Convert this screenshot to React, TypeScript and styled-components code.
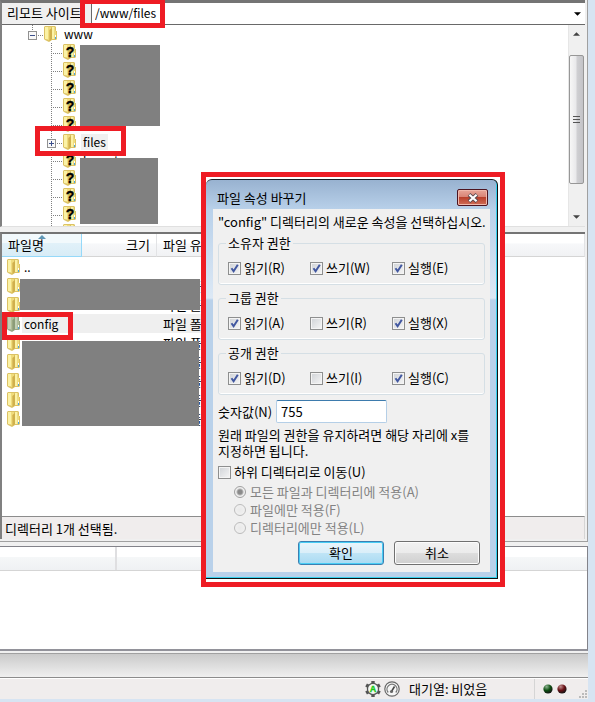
import React from "react";
import styled, { createGlobalStyle, css } from "styled-components";

const GlobalStyle = createGlobalStyle`
  *, *::before, *::after { box-sizing: border-box; }
  body {
    margin: 0;
    background: #d7e4f2;
    color: #000;
    font: 13px/16px "Noto Sans CJK KR", "Noto Sans", sans-serif;
  }
  button, input, select { font: inherit; color: inherit; }
`;

const Page = styled.div`
  position: relative;
  display: flex;
  flex-direction: column;
  min-height: 100vh;
  padding: 0 7px 3px 0;
  overflow: hidden;
`;

const Window = styled.main`
  flex: 1;
  display: flex;
  flex-direction: column;
  background: #f0f0f0;
`;

const RemoteSide = styled.div`
  flex: 1;
  display: flex;
  flex-direction: column;
  gap: 5px;
  padding: 0 2px 2px 0;
  border-right: 1px solid #a0a0a0;
  border-bottom: 1px solid #a0a0a0;
`;

const sunken = css`
  border-left: 2px solid #808080;
  border-top: 2px solid #747474;
`;

const SitePane = styled.section`
  ${sunken}
  border-top-width: 3px;
  border-bottom: 1px solid #e0e0e0;
`;

const AddressBar = styled.div`
  display: flex;
  align-items: stretch;
  height: 22px;
  border-bottom: 1px solid #696969;
  background: #f0f0f0;
`;

const AddressLabel = styled.label`
  width: 90px;
  padding: 2px 0 0 5px;
  border-right: 1px solid #696969;
  white-space: nowrap;
`;

const AddressField = styled.div`
  flex: 1;
  display: flex;
  align-items: center;
  padding-right: 4px;
  background: #fff;
`;

const AddressSelect = styled.select`
  flex: 1;
  min-width: 0;
  height: 21px;
  padding: 0 0 2px 3px;
  border: 0;
  outline: 0;
  background: transparent;
  font-size: 12px;
  appearance: none;
`;

const TreePane = styled.div`
  position: relative;
  display: flex;
  height: 201px;
  overflow: hidden;
  background: #fff;
`;

const Tree = styled.ul`
  flex: 1;
  margin: 0;
  padding: 0;
  list-style: none;
`;

const TreeRow = styled.li<{ $depth: number }>`
  display: flex;
  align-items: center;
  height: 18px;
  padding-left: ${(p) => 7 + p.$depth * 19}px;
`;

const TreeLabel = styled.span<{ $marked?: boolean }>`
  margin-left: 5px;
  padding: 0 2px;
  font-size: 12px;
  background: ${(p) => (p.$marked ? "#f0f0f0" : "transparent")};
`;

const Mask = styled.div<{ $x: number; $y: number; $w: number; $h: number }>`
  position: absolute;
  left: ${(p) => p.$x}px;
  top: ${(p) => p.$y}px;
  width: ${(p) => p.$w}px;
  height: ${(p) => p.$h}px;
  background: #808080;
`;

const Highlight = styled(Mask)`
  border: 5px solid #ee1c24;
  background: transparent;
  pointer-events: none;
`;

const ScrollTrack = styled.div`
  display: flex;
  flex-direction: column;
  align-items: center;
  width: 17px;
  padding: 7px 1px 7px 0;
  background: #f0f0f0;
  border-left: 1px solid #e6e6e6;
`;

const ScrollThumb = styled.div`
  display: flex;
  align-items: center;
  justify-content: center;
  width: 15px;
  height: 129px;
  margin: 19px 0 auto;
  border: 1px solid #979797;
  border-radius: 2px;
  background: linear-gradient(90deg, #f7f7f7, #e9e9eb 45%, #cfcfd2 55%, #c3c3c7);
`;

const ListPane = styled.section`
  ${sunken}
  flex: 1;
  position: relative;
  display: flex;
  flex-direction: column;
  background: #fff;
`;

const FileTable = styled.table`
  width: 100%;
  table-layout: fixed;
  border-collapse: separate;
  border-spacing: 0;
`;

const HeadCell = styled.th<{ $sorted?: boolean; $right?: boolean }>`
  position: relative;
  height: 23px;
  padding: 0 6px;
  font-weight: 400;
  white-space: nowrap;
  text-align: ${(p) => (p.$right ? "right" : "left")};
  border-right: 1px solid ${(p) => (p.$sorted ? "#96d9f9" : "#e2e3e5")};
  border-bottom: 1px solid ${(p) => (p.$sorted ? "#96d9f9" : "#d5d5d5")};
  background: ${(p) =>
    p.$sorted
      ? "linear-gradient(#f2f9fc 0 40%, #e1f1f9 42%, #d8ecf6)"
      : "linear-gradient(#fff 0 42%, #f7f8fa 44%, #f1f2f4)"};
`;

const SortMark = styled.svg`
  position: absolute;
  left: 36px;
  top: 1px;
`;

const FileRow = styled.tr<{ $selected?: boolean }>`
  td:not(:first-child):not(:last-child), td:first-child span {
    background: ${(p) => (p.$selected ? "#efefef" : "transparent")};
  }
`;

const FileCell = styled.td`
  height: 19px;
  padding: 0 6px;
  white-space: nowrap;
`;

const NameCell = styled(FileCell)`
  padding: 0 0 0 5px;
`;

const NameBox = styled.div`
  display: flex;
  align-items: center;
  height: 19px;
  gap: 2px;
`;

const FileName = styled.span`
  flex: 1;
  padding-left: 2px;
  font-size: 12px;
  line-height: 19px;
`;

const ListStatus = styled.div`
  height: 23px;
  margin-top: auto;
  padding: 4px 3px;
  border-top: 1px solid #8c8c8c;
  border-right: 1px solid #d5d5d5;
  background: #f0eded;
`;

const QueuePane = styled.section`
  height: 105px;
  margin-top: 4px;
  border-top: 1px solid #83838a;
  border-right: 1px solid #83838a;
  border-bottom: 2px solid #92929a;
  background: #fff;
`;

const QueueHead = styled.div`
  display: flex;
  height: 24px;
  border-bottom: 1px solid #d5d5d5;
  background: linear-gradient(#fff 0 42%, #f5f7f8 44%, #eff1f3);
`;

const QueueColumn = styled.div`
  width: 117px;
  border-right: 2px solid #dfdfe1;
`;

const TabStrip = styled.div`
  height: 25px;
  margin-top: 2px;
  border-top: 1px solid #a0a0a0;
  border-bottom: 1px solid #8c8c8c;
  background: linear-gradient(#cacaca, #f0f0f0);
`;

const StatusBar = styled.footer`
  display: flex;
  align-items: center;
  height: 21px;
  border-top: 1px solid #fff;
  background: #f0eded;
`;

const QueueStatus = styled.div`
  display: flex;
  align-items: center;
  gap: 3px;
  width: 170px;
  height: 20px;
  margin-left: auto;
  border-right: 1px solid #d5d5d5;
`;

const QueueText = styled.span`
  margin-left: 6px;
`;

const Lights = styled.div`
  display: flex;
  align-items: center;
  width: 53px;
  height: 20px;
  padding-left: 8px;
  gap: 4px;
`;

const Grip = styled.svg`
  margin: 10px 1px 0 auto;
`;

const Frame = styled.div`
  position: absolute;
  left: 201px;
  top: 172px;
  width: 304px;
  padding: 2px 2px 3px 0;
  border: 5px solid #ee1c24;
  background: #fff;
`;

const DialogBox = styled.section`
  padding: 0 7px 6px;
  border-top: 1px solid #1b1f24;
  border-right: 1px solid #111;
  border-bottom: 1px solid #111;
  border-radius: 6px 6px 0 0;
  box-shadow: inset -1px -1px 0 #35d0ee;
  background: linear-gradient(#98b2d0, #b9d1ea 30px, #dce8f5 118px, #b9d1ea 120px);
`;

const TitleBar = styled.header`
  display: flex;
  align-items: center;
  justify-content: space-between;
  height: 29px;
  padding: 6px 2px 0 4px;
`;

const Title = styled.h1`
  margin: 0;
  font-size: 13px;
  font-weight: 400;
`;

const CloseButton = styled.button`
  display: grid;
  place-items: center;
  width: 31px;
  height: 17px;
  padding: 0;
  border: 1px solid #4c1420;
  border-radius: 2px;
  box-shadow: inset 0 0 0 1px #f0b8ac;
  background: linear-gradient(#e8a699, #d98476 45%, #b9402c 50%, #cf6e58);
`;

const DialogForm = styled.form`
  display: flex;
  flex-direction: column;
  height: 363px;
  padding: 5px 5px 7px;
  background: #f0f0f0;
`;

const Prompt = styled.p`
  margin: 0;
  white-space: nowrap;
`;

const Group = styled.fieldset`
  display: flex;
  height: 50px;
  margin: 5px 0 0;
  padding: 8px 0 0 9px;
  border: 1px solid #d5dfe5;
  border-radius: 3px;
  box-shadow: inset 0 -1px 0 #fff;
`;

const Legend = styled.legend`
  margin-left: -2px;
  padding: 0 2px;
`;

const Option = styled.label<{ $dim?: boolean }>`
  display: flex;
  align-items: center;
  gap: 3px;
  height: 18px;
  color: ${(p) => (p.$dim ? "#838383" : "#000")};
  white-space: nowrap;
`;

const GroupOption = styled(Option)`
  width: 82px;
`;

const tick =
  "url(\"data:image/svg+xml,%3Csvg xmlns='http://www.w3.org/2000/svg' viewBox='0 0 11 11'%3E%3Cpath d='M2.5 5.2 4.6 8.2 8.8 1.8' fill='none' stroke='%234157a0' stroke-width='2'/%3E%3C/svg%3E\")";

const Check = styled.input.attrs({ type: "checkbox" })`
  appearance: none;
  flex: none;
  width: 13px;
  height: 13px;
  margin: 0;
  border: 1px solid #8e8f8f;
  box-shadow: inset 0 0 0 1px #f4f4f4;
  background: linear-gradient(135deg, #cfd2d6, #f6f6f6);
  &:checked {
    background: ${tick}, linear-gradient(135deg, #cfd2d6, #f6f6f6);
  }
`;

const Radio = styled.input.attrs({ type: "radio" })`
  appearance: none;
  flex: none;
  width: 12px;
  height: 12px;
  margin: 0 1px 0 0;
  border: 1px solid #bcbcbc;
  border-radius: 50%;
  background: radial-gradient(#e9e9e9, #f3f3f3);
  &:checked {
    border-color: #a0a0a0;
    background: radial-gradient(circle, #8a8a8a 0 2px, #b4b4b4 3px, #f0f0f0 4px);
  }
`;

const NumberRow = styled.div`
  display: flex;
  align-items: center;
  gap: 4px;
  margin-top: 5px;
`;

const NumberInput = styled.input`
  width: 111px;
  height: 23px;
  padding: 0 4px 1px;
  border: 1px solid #b5cfe7;
  border-top-color: #3d7bad;
  border-radius: 2px;
  outline: 0;
  background: #fff;
`;

const Hint = styled.p`
  margin: 4px 0;
  padding-right: 8px;
`;

const RadioList = styled.div`
  padding: 2px 0 0 16px;
`;

const Buttons = styled.div`
  display: flex;
  justify-content: flex-end;
  gap: 10px;
  margin-top: auto;
  padding-right: 5px;
`;

const DialogButton = styled.button<{ $primary?: boolean }>`
  width: 86px;
  height: 24px;
  padding: 0 0 1px;
  border: 1px solid ${(p) => (p.$primary ? "#3c7fb1" : "#707070")};
  border-radius: 3px;
  box-shadow: inset 0 0 0 ${(p) => (p.$primary ? "1px #48cdf5" : "1px #fcfcfc")};
  background: ${(p) =>
    p.$primary
      ? "linear-gradient(#e9f5fb 0, #daeef9 48%, #bfe4f6 52%, #a9daf2)"
      : "linear-gradient(#f2f2f2, #ebebeb 48%, #dddddd 52%, #cfcfcf)"};
`;

function Folder({ unknown, tint }: { unknown?: boolean; tint?: boolean }) {
  const light = tint ? "#c3d0b6" : "#fbf2a6";
  const mid = tint ? "#b0bd96" : "#f0dc7c";
  const dark = tint ? "#8b9c78" : "#d0b04c";
  const edge = tint ? "#98a585" : "#dcc264";
  return (
    <svg width="13" height="16" viewBox="0 0 13 16" aria-hidden="true">
      <path d="M1 0h10l1 1v4h1v8l-1 1H8l-3 2-4-2-1-1V1z" fill={edge} />
      <path d="M1 1h3v12.5L1 13z" fill={light} />
      <path d="M4 1h3v2L5.500 4v10.500L4 14z" fill={mid} />
      <path d="M5.500 4L8 2v11l-2.500 2z" fill={dark} />
      <path d="M8 1h2.500v12H8z" fill={light} />
      <path d="M10.500 4.500h1.500v8.500h-1.500z" fill={mid} />
      <path d="M11 9h1v2h-1z" fill="#fff" />
      <path d="M11 11h1v2h-1z" fill="#49a7e0" />
      {unknown && (
        <text x="7" y="13" textAnchor="middle" fontFamily="Liberation Sans" fontSize="14" fontWeight="700" stroke="#000" strokeWidth="0.4">
          ?
        </text>
      )}
    </svg>
  );
}

function Branch({ root, toggle }: { root?: boolean; toggle?: "+" | "-" }) {
  return (
    <svg width="35" height="18" viewBox="0 0 35 18" aria-hidden="true" shapeRendering="crispEdges">
      <path d={root ? "M23.5 0v10" : "M23.5 0v18"} stroke="#808080" strokeDasharray="1 1" />
      <path d="M23 10.5h12" stroke="#808080" strokeDasharray="1 1" />
      {toggle && (
        <>
          <rect x="19.5" y="6.5" width="8" height="8" rx="1" fill="#f8f8f8" stroke="#919191" />
          <path d={toggle === "+" ? "M21 10.5h5M23.5 8v5" : "M21 10.5h5"} stroke="#3b4f8c" />
        </>
      )}
    </svg>
  );
}

function Arrow({ up, size = 7, color = "#444" }: { up?: boolean; size?: number; color?: string }) {
  return (
    <svg width={size} height="4" viewBox="0 0 8 4" aria-hidden="true">
      <path d={up ? "M0 4l4-4 4 4z" : "M0 0h8L4 4z"} fill={color} />
    </svg>
  );
}

function Gear() {
  return (
    <svg width="16" height="16" viewBox="0 0 16 16" aria-hidden="true">
      <g stroke="#555" strokeWidth="3.4">
        <path d="M8 0v16M1.1 4l13.8 8M14.9 4L1.1 12" />
      </g>
      <circle cx="8" cy="8" r="6.2" fill="#555" />
      <circle cx="8" cy="8" r="4.9" fill="#f4f8f4" />
      <text x="8" y="11" textAnchor="middle" fontFamily="Liberation Sans" fontSize="9" fontWeight="700" fill="#18c818" stroke="#18c818" strokeWidth="0.4">
        A
      </text>
    </svg>
  );
}

function Gauge() {
  return (
    <svg width="16" height="16" viewBox="0 0 16 16" fill="none" aria-hidden="true">
      <circle cx="8" cy="8" r="7.2" fill="#f6f6f6" stroke="#686868" strokeWidth="1.2" />
      <path d="M4.2 11.5a5 5 0 1 1 7.6 0" stroke="#777" strokeWidth="1.3" />
      <path d="M7.5 10.5l3-5" stroke="#444" strokeWidth="1.5" />
      <circle cx="7.5" cy="10.5" r="1.6" fill="#666" />
    </svg>
  );
}

function Light({ name, color, shine }: { name: string; color: string; shine: string }) {
  return (
    <svg width="10" height="10" viewBox="0 0 10 10" aria-hidden="true">
      <defs>
        <radialGradient id={name} cx="0.35" cy="0.25" r="0.75">
          <stop offset="0" stopColor={shine} />
          <stop offset="0.55" stopColor={color} />
          <stop offset="1" stopColor="#151515" />
        </radialGradient>
      </defs>
      <circle cx="5" cy="5" r="4.6" fill={`url(#${name})`} />
    </svg>
  );
}

const treeRows = ["?", "?", "?", "?", "?", "files", "layouts", "?", "?", "?", ""];
const fileRows = ["..", "", "", "config", "", "", "", "", ""];
const groups = [
  { title: "소유자 권한", options: [["읽기(R)", true], ["쓰기(W)", true], ["실행(E)", true]] },
  { title: "그룹 권한", options: [["읽기(A)", true], ["쓰기(R)", false], ["실행(X)", true]] },
  { title: "공개 권한", options: [["읽기(D)", true], ["쓰기(I)", false], ["실행(C)", true]] },
] as { title: string; options: [string, boolean][] }[];
const scopes = ["모든 파일과 디렉터리에 적용(A)", "파일에만 적용(F)", "디렉터리에만 적용(L)"];

function PermissionDialog() {
  return (
    <Frame>
      <DialogBox role="dialog" aria-labelledby="dialog-title">
        <TitleBar>
          <Title id="dialog-title">파일 속성 바꾸기</Title>
          <CloseButton type="button" aria-label="닫기">
            <svg width="12" height="10" viewBox="0 0 12 10" aria-hidden="true">
              <path d="M2 1.5l8 7M10 1.5l-8 7" stroke="#5b4a50" strokeWidth="4" />
              <path d="M2.4 1.8l7.2 6.4M9.6 1.8L2.4 8.2" stroke="#fff" strokeWidth="2.2" />
            </svg>
          </CloseButton>
        </TitleBar>
        <DialogForm onSubmit={(e) => e.preventDefault()}>
          <Prompt>"config" 디렉터리의 새로운 속성을 선택하십시오.</Prompt>
          {groups.map((group) => (
            <Group key={group.title}>
              <Legend>{group.title}</Legend>
              {group.options.map(([label, on]) => (
                <GroupOption key={label}>
                  <Check defaultChecked={on} />
                  {label}
                </GroupOption>
              ))}
            </Group>
          ))}
          <NumberRow>
            <label htmlFor="numeric">숫자값(N)</label>
            <NumberInput id="numeric" defaultValue="755" />
          </NumberRow>
          <Hint>
            원래 파일의 권한을 유지하려면 해당 자리에 x를
            <br />
            지정하면 됩니다.
          </Hint>
          <Option>
            <Check />
            하위 디렉터리로 이동(U)
          </Option>
          <RadioList>
            {scopes.map((label, i) => (
              <Option key={label} $dim>
                <Radio name="scope" disabled defaultChecked={i === 0} />
                {label}
              </Option>
            ))}
          </RadioList>
          <Buttons>
            <DialogButton type="submit" $primary>확인</DialogButton>
            <DialogButton type="button">취소</DialogButton>
          </Buttons>
        </DialogForm>
      </DialogBox>
    </Frame>
  );
}

export default function App() {
  return (
    <Page>
      <GlobalStyle />
      <Window>
        <RemoteSide>
          <SitePane>
            <AddressBar>
              <AddressLabel htmlFor="remote">리모트 사이트:</AddressLabel>
              <AddressField>
                <AddressSelect id="remote">
                  <option>/www/files</option>
                </AddressSelect>
                <Arrow color="#000" />
              </AddressField>
            </AddressBar>
            <TreePane>
              <Tree>
                <TreeRow $depth={0}>
                  <Branch root toggle="-" />
                  <Folder />
                  <TreeLabel>www</TreeLabel>
                </TreeRow>
                {treeRows.map((name, i) => (
                  <TreeRow key={i} $depth={1}>
                    <Branch toggle={name === "files" ? "+" : undefined} />
                    <Folder unknown={name === "?" || name === "layouts"} />
                    {name.length > 1 && <TreeLabel $marked={name === "files"}>{name}</TreeLabel>}
                  </TreeRow>
                ))}
              </Tree>
              <ScrollTrack>
                <Arrow up />
                <ScrollThumb>
                  <svg width="7" height="8" viewBox="0 0 7 8" aria-hidden="true">
                    <path d="M0 .5h7M0 3.5h7M0 6.5h7" stroke="#555" />
                  </svg>
                </ScrollThumb>
                <Arrow />
              </ScrollTrack>
              <Mask $x={78} $y={20} $w={80} $h={81} />
              <Mask $x={78} $y={133} $w={78} $h={66} />
            </TreePane>
          </SitePane>
          <ListPane>
            <FileTable>
              <colgroup>
                <col width="80" />
                <col width="75" />
                <col width="140" />
                <col />
              </colgroup>
              <thead>
                <tr>
                  <HeadCell $sorted>
                    파일명
                    <SortMark width="8" height="4" viewBox="0 0 8 4" aria-hidden="true">
                      <path d="M0 4l4-4 4 4z" fill="#5f97b5" />
                    </SortMark>
                  </HeadCell>
                  <HeadCell $right>크기</HeadCell>
                  <HeadCell>파일 유형</HeadCell>
                  <HeadCell />
                </tr>
              </thead>
              <tbody>
                {fileRows.map((name, i) => (
                  <FileRow key={i} $selected={name === "config"}>
                    <NameCell>
                      <NameBox>
                        <Folder tint={name === "config"} />
                        <FileName>{name || "\u00a0"}</FileName>
                      </NameBox>
                    </NameCell>
                    <FileCell />
                    <FileCell>{i > 0 && "파일 폴더"}</FileCell>
                    <FileCell />
                  </FileRow>
                ))}
              </tbody>
            </FileTable>
            <ListStatus>디렉터리 1개 선택됨.</ListStatus>
            <Mask $x={18} $y={45} $w={180} $h={31} />
            <Mask $x={20} $y={107} $w={177} $h={85} />
          </ListPane>
        </RemoteSide>
        <QueuePane>
          <QueueHead>
            <QueueColumn />
          </QueueHead>
        </QueuePane>
        <TabStrip />
        <StatusBar>
          <QueueStatus>
            <Gear />
            <Gauge />
            <QueueText>대기열: 비었음</QueueText>
          </QueueStatus>
          <Lights>
            <Light name="green-light" color="#0d4f12" shine="#8fb592" />
            <Light name="red-light" color="#6a1015" shine="#c08f90" />
            <Grip width="8" height="8" viewBox="0 0 8 8" aria-hidden="true">
              <path d="M6 0h2v2H6zM3 3h2v2H3zM6 3h2v2H6zM0 6h2v2H0zM3 6h2v2H3zM6 6h2v2H6z" fill="#bbb" />
            </Grip>
          </Lights>
        </StatusBar>
      </Window>
      <Highlight $x={80} $y={-1} $w={85} $h={29} />
      <Highlight $x={35} $y={126} $w={91} $h={30} />
      <Highlight $x={2} $y={312} $w={71} $h={28} />
      <PermissionDialog />
    </Page>
  );
}
